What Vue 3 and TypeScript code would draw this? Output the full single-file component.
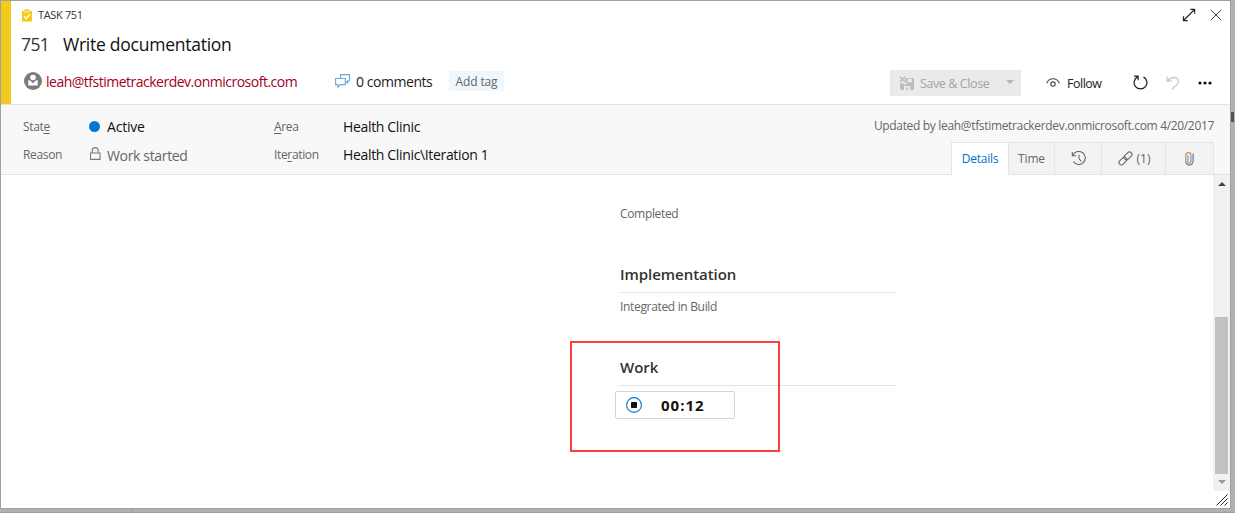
<script setup lang="ts">
interface Tab {
  key: string
  label?: string
  icon?: 'history' | 'link' | 'clip'
}

const tabs: Tab[] = [
  { key: 'details', label: 'Details' },
  { key: 'time', label: 'Time' },
  { key: 'history', icon: 'history' },
  { key: 'links', icon: 'link', label: '(1)' },
  { key: 'attachments', icon: 'clip' },
]
const activeTab = 'details'
</script>

<template>
  <div class="backdrop">
    <i class="page-mark mark-right"></i>
    <i class="page-mark mark-line"></i>
    <section class="dialog">
      <header class="header">
        <div class="type-row">
          <svg class="task-icon" width="10" height="13" viewBox="0 0 10 13">
            <path d="M0 2h2.200V1h1.400a1.400 1.400 0 0 1 2.800 0h1.400v1H10v10.500H0z" fill="#f2cb1d" />
            <path d="M2.500 2.800h5" stroke="#fff" stroke-width=".9" />
            <path d="M2 7.300l2.100 2.200 3.900-4.300" fill="none" stroke="#fff" stroke-width="1.300" />
          </svg>
          <span class="type-name">TASK 751</span>
          <svg class="expand" width="14" height="14" viewBox="0 0 14 14" fill="none" stroke="#222" stroke-width="1.100">
            <path d="M1.500 12.500l11-11M8.300 1.400h4.300v4.300M1.400 8.300v4.300h4.300" />
          </svg>
          <svg class="close" width="12" height="12" viewBox="0 0 12 12" fill="none" stroke="#444" stroke-width="1">
            <path d="M.7.7l10.600 10.600M11.300.7L.7 11.300" />
          </svg>
        </div>
        <div class="title-row">
          <span class="item-id">751</span>
          <span class="item-title">Write documentation</span>
        </div>
        <div class="action-row">
          <svg class="avatar" width="18" height="18" viewBox="0 0 18 18">
            <circle cx="9" cy="9" r="9" fill="#7c7c7c" />
            <circle cx="9" cy="5.500" r="2.800" fill="#fff" />
            <path d="M4.300 8.200h1.500L9 11.300l3.200-3.100h1.500v5.300H4.300z" fill="#fff" />
          </svg>
          <span class="assignee">leah@tfstimetrackerdev.onmicrosoft.com</span>
          <svg class="comments-icon" width="15" height="14" viewBox="0 0 15 14" fill="none" stroke="#6ba5dc" stroke-width="1.100">
            <path d="M5.500 4V.6h9v6.200h-1.800v2.400l-2.200-2.200" />
            <path d="M.6 4.500h9.700v6.100H5.400l-2.500 2.500v-2.500H.6z" />
          </svg>
          <span class="comments">0 comments</span>
          <button class="add-tag">Add tag</button>
          <div class="commands">
            <button class="save">
              <svg width="15" height="14" viewBox="0 0 15 14">
                <path d="M6 2h9v12H2.500L1 12.500V8.600l2-1.800 2.600 2.300L8 7 5.800 5z" fill="#bdbdbd" />
                <path d="M8.300 2.800h4.400v3.400H8.600zM5 10h6.300v4H9.200v-2.400H7.400V14H5z" fill="#eaeaea" />
                <path d="M.6.6l5.600 5.600M6.200.6L.6 6.200" stroke="#bdbdbd" stroke-width="1.400" />
              </svg>
              <span class="save-text">Save &amp; Close</span>
              <svg class="caret" width="8" height="4" viewBox="0 0 8 4"><path d="M0 0h8L4 4z" fill="#b5b5b5" /></svg>
            </button>
            <svg class="eye" width="14" height="10" viewBox="0 0 14 10" fill="none" stroke="#444" stroke-width="1.100">
              <path d="M.6 5.200C2 2 4.300.7 7 .7s5 1.300 6.400 4.500" />
              <circle cx="7" cy="6.100" r="2.200" />
            </svg>
            <span class="follow">Follow</span>
            <svg class="refresh" width="15" height="15" viewBox="0 0 15 15" fill="none" stroke="#222" stroke-width="1.200">
              <path d="M4.500 1.900A6.400 6.400 0 1 0 10.500 1.900M1 1.100h4.100v4.200" />
            </svg>
            <svg class="undo" width="13" height="14" viewBox="0 0 13 14" fill="none" stroke="#c9c9c9" stroke-width="1.300">
              <path d="M1.200.5v4.600h4.700M1.300 5C3.500 2.700 5.500 1.500 8 1.500c2.600 0 4.200 1.700 4.200 3.900 0 1.700-.8 2.700-2 3.900L5.900 13.300" />
            </svg>
            <svg class="more" width="14" height="4" viewBox="0 0 14 4" fill="#111">
              <circle cx="2" cy="2" r="1.600" /><circle cx="7" cy="2" r="1.600" /><circle cx="12" cy="2" r="1.600" />
            </svg>
          </div>
        </div>
      </header>

      <div class="info">
        <div class="fields">
          <span class="label l-state">Stat<u>e</u></span>
          <span class="value v-active"><i class="dot"></i><span>Active</span></span>
          <span class="label l-area"><u>A</u>rea</span>
          <span class="value v-area">Health Clinic</span>
          <span class="label l-reason">Reason</span>
          <span class="value v-reason">
            <svg width="12" height="14" viewBox="0 0 12 14" fill="none" stroke="#777" stroke-width="1.100">
              <path d="M1.500 6h9.500v6.400H1.500zM3.200 6V3.600a3 3 0 0 1 6 0V6" />
            </svg>
            <span>Work started</span>
          </span>
          <span class="label l-iter">Ite<u>r</u>ation</span>
          <span class="value v-iter">Health Clinic\Iteration 1</span>
        </div>
        <div class="info-side">
          <div class="updated">Updated by leah@tfstimetrackerdev.onmicrosoft.com 4/20/2017</div>
          <nav class="tabs">
            <div v-for="tab in tabs" :key="tab.key" class="tab" :class="['t-' + tab.key, { active: tab.key === activeTab }]">
              <svg v-if="tab.icon === 'history'" width="16" height="15" viewBox="0 0 16 15" fill="none" stroke="#666" stroke-width="1.100">
                <path d="M1.300 1v3.700h3.900M1.700 4.600A6.500 6.500 0 1 1 2.300 10.500M8 3.700v4.100l2.500 2.700" />
              </svg>
              <svg v-else-if="tab.icon === 'link'" width="15" height="15" viewBox="0 0 15 15" fill="none" stroke="#666" stroke-width="1.100">
                <rect x="-4.500" y="-2.400" width="9" height="4.800" rx="2.400" transform="translate(10 4.900) rotate(-45)" />
                <rect x="-4.500" y="-2.400" width="9" height="4.800" rx="2.400" transform="translate(4.900 10) rotate(-45)" />
              </svg>
              <svg v-else-if="tab.icon === 'clip'" width="9" height="14" viewBox="0 0 9 14" fill="none" stroke="#777" stroke-width="1.200">
                <path d="M3 3.500v6.300a1.500 1.500 0 0 0 3 0V3.500" stroke="#6f9cc4" />
                <path d="M.8 9.500V3.200a2.600 2.600 0 0 1 5.200 0" stroke="#c08c58" />
                <path d="M.8 9.300a3.600 3.600 0 0 0 7.300.3V1.500" />
              </svg>
              <span v-if="tab.label" class="tab-text">{{ tab.label }}</span>
            </div>
          </nav>
        </div>
      </div>

      <main class="body">
        <div class="content">
          <div class="field-label completed"><span>Completed</span></div>
          <h3 class="impl"><span>Implementation</span></h3>
          <div class="field-label build"><span>Integrated in Build</span></div>
          <h3 class="work"><span>Work</span></h3>
          <button class="timer">
            <svg width="16" height="16" viewBox="0 0 16 16">
              <circle cx="8" cy="8" r="7.400" fill="#fff" stroke="#0078d4" stroke-width="1.100" />
              <rect x="5" y="5" width="6" height="6" rx=".8" fill="#111" />
            </svg>
            <span class="clock">00:12</span>
          </button>
        </div>
        <div class="scrollbar">
          <svg class="up" width="8" height="4" viewBox="0 0 8 4"><path d="M0 4h8L4 0z" fill="#444" /></svg>
          <div class="thumb"></div>
          <svg class="down" width="8" height="4" viewBox="0 0 8 4"><path d="M0 0h8L4 4z" fill="#999" /></svg>
        </div>
      </main>
      <footer class="footer">
        <svg width="12" height="12" viewBox="0 0 12 12" stroke="#222" stroke-width="1">
          <path d="M.5 11.500l11-11M4.500 11.500l7-7M8.500 11.500l3-3" />
        </svg>
      </footer>
      <div class="highlight"></div>
    </section>
  </div>
</template>

<style>
html, body { margin: 0; overflow: hidden; }
</style>

<style scoped>
.backdrop {
  position: relative;
  box-sizing: border-box;
  width: 1235px;
  height: 513px;
  background: #b1b1b1;
  border-bottom: 1px solid #9d9d9d;
  font-family: "Open Sans", "Noto Sans", sans-serif;
  font-size: 12px;
}
.dialog {
  position: relative;
  box-sizing: border-box;
  width: 1231px;
  height: 509px;
  border: 1px solid #a0a0a0;
  background: #fff;
}
.page-mark { position: absolute; background: #555; }
.mark-right { left: 1231px; top: 112px; width: 3px; height: 10px; }
.mark-line { left: 132px; top: 509px; width: 1px; height: 3px; background: #959595; }
svg { display: block; flex: none; }
span { white-space: nowrap; }
button { font: inherit; padding: 0; margin: 0; border: 0; box-sizing: border-box; }

.header {
  box-sizing: border-box;
  height: 104px;
  border-bottom: 1px solid #e4e4e4;
  position: relative;
}
.header::before {
  content: "";
  position: absolute;
  left: 0;
  top: 0;
  width: 10px;
  height: 103px;
  background: #f2cb1d;
}
.type-row { display: flex; align-items: center; height: 28px; padding: 0 8px 0 21px; }
.type-name { margin-left: 6px; padding-bottom: 2px; font-size: 11px; color: #333; letter-spacing: -0.35px; }
.expand { margin-left: auto; }
.close { margin-left: 14px; }
.title-row { display: flex; align-items: center; height: 32px; padding-left: 20px; font-size: 17.5px; color: #111; }
.title-row span { padding-bottom: 2px; }
.item-id { width: 42px; color: #333; letter-spacing: -0.6px; }
.item-title { letter-spacing: -0.25px; }
.action-row { display: flex; align-items: center; height: 40px; padding-left: 23px; font-size: 14px; }
.assignee { width: 289px; margin-left: 4px; color: #a4001d; letter-spacing: -0.5px; }
.comments { width: 93px; margin-left: 6px; color: #222; letter-spacing: -0.45px; padding-top: 1px; }
.add-tag { width: 55px; height: 20px; background: #eff6fc; color: #666; font-size: 12px; letter-spacing: -0.15px; }
.commands { display: flex; align-items: center; margin-left: auto; padding: 3px 18px 0 0; font-size: 12.5px; }
.save { display: flex; align-items: center; width: 131px; height: 26px; padding-left: 9px; background: #eaeaea; color: #a3a3a3; }
.save-text { width: 86px; margin-left: 6px; padding-top: 1px; text-align: left; letter-spacing: -0.4px; }
.caret { margin-bottom: 2px; }
.eye { margin-left: 25px; }
.follow { width: 66px; margin-left: 7px; padding-top: 2px; color: #222; letter-spacing: -0.5px; }
.undo { margin-left: 18px; }
.more { margin-left: 19px; }

.info {
  box-sizing: border-box;
  display: flex;
  justify-content: space-between;
  height: 70px;
  background: #f8f8f8;
  border-bottom: 1px solid #e4e4e4;
}
.fields {
  display: grid;
  grid-template-columns: 66px 185px 69px 160px;
  grid-template-rows: 28px 28px;
  align-items: center;
  align-content: start;
  padding: 7px 0 0 22px;
}
.label { font-size: 12px; color: #666; letter-spacing: -0.35px; }
.l-reason, .l-iter { padding-top: 1px; }
.label u { text-underline-offset: 2px; }
.value { display: flex; align-items: center; font-size: 14px; color: #111; letter-spacing: -0.34px; }
.v-active { letter-spacing: -0.2px; }
.dot { width: 11px; height: 11px; margin-right: 7px; border-radius: 50%; background: #0078d4; }
.v-reason { color: #666; gap: 6px; }
.v-reason span { padding-top: 2px; }
.info-side { display: flex; flex-direction: column; align-items: flex-end; padding-right: 16px; }
.updated { height: 37px; line-height: 41px; color: #666; font-size: 12px; letter-spacing: -0.33px; white-space: nowrap; }
.tabs { display: flex; height: 33px; }
.tab {
  box-sizing: border-box;
  display: flex;
  align-items: center;
  justify-content: center;
  gap: 4px;
  height: 32px;
  border: 1px solid #e4e4e4;
  border-left-width: 0;
  border-bottom: 0;
  background: #f3f3f3;
  color: #666;
}
.tab.active { height: 33px; border-left-width: 1px; background: #fff; color: #0072cf; padding-bottom: 2px; letter-spacing: -0.25px; }
.t-details { width: 58px; }
.t-time { width: 46px; letter-spacing: -0.15px; }
.t-history { width: 47px; padding-left: 1px; }
.t-links { width: 64px; padding-left: 1px; }
.t-attachments { width: 48px; }

.body { display: flex; height: 316px; }
.content { flex: 1; padding: 29px 0 0 618px; }
.field-label { height: 20px; line-height: 20px; padding-left: 1px; color: #666; font-size: 12px; letter-spacing: -0.33px; }
h3 {
  box-sizing: border-box;
  width: 277px;
  height: 34px;
  margin: 0;
  padding-left: 1px;
  border-bottom: 1px solid #e4e4e4;
  font-size: 15px;
  font-weight: 600;
  line-height: 31px;
  letter-spacing: -0.05px;
  color: #333;
}
.impl { margin-top: 35px; }
.build { margin-top: 4px; }
.work { margin-top: 35px; }
.timer {
  display: flex;
  align-items: center;
  width: 120px;
  height: 28px;
  margin: 5px 0 0 -4px;
  padding-left: 10px;
  border: 1px solid #d4d4d4;
  border-radius: 2px;
  background: #fff;
}
.clock { margin-left: 19px; padding-bottom: 1px; font-size: 15px; font-weight: 700; letter-spacing: 1px; color: #111; }
.scrollbar { box-sizing: border-box; width: 17px; padding: 7px 2px 0; background: #f1f1f1; }
.up, .down { margin-left: 3px; }
.thumb { width: 13px; height: 157px; margin: 131px 0 6px; background: #c1c1c1; }
.footer { display: flex; justify-content: flex-end; padding: 3px 2px 0 0; }
.highlight {
  position: absolute;
  left: 569px;
  top: 340px;
  box-sizing: border-box;
  width: 210px;
  height: 111px;
  border: 2px solid #fb4040;
}
</style>
